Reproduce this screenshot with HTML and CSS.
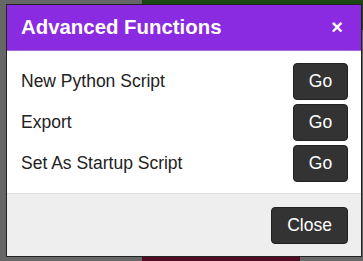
FILE: index.html
```html
<!DOCTYPE html>
<html lang="en">
<head>
  <meta charset="UTF-8">
  <title>Advanced Functions</title>
  <link rel="stylesheet" href="styles.css">
</head>
<body>

  <!-- page behind the dialog -->
  <div class="app">
    <div class="app-bar"></div>
    <div class="app-tile"></div>
  </div>

  <div class="backdrop"></div>

  <div class="modal" id="advancedModal">
    <div class="modal-header">
      <h2>Advanced Functions</h2>
      <span class="modal-close">&times;</span>
    </div>

    <div class="modal-body">
      <div class="action-row">
        <span>New Python Script</span>
        <button class="btn">Go</button>
      </div>
      <div class="action-row">
        <span>Export</span>
        <button class="btn">Go</button>
      </div>
      <div class="action-row">
        <span>Set As Startup Script</span>
        <button class="btn">Go</button>
      </div>
    </div>

    <div class="modal-footer">
      <button class="btn btn-close">Close</button>
    </div>
  </div>

</body>
</html>
```

FILE: styles.css
```css
body {
  font-family: 'Liberation Sans', Arial, sans-serif;
  background-color: #fff;
  margin: 0;
  width: 363px;
  height: 261px;
  overflow: hidden;
  position: relative;
}

.app {
  height: 100%;
  background: #ccc;
}

.app-bar {
  margin-left: 142px;
  height: 30px;
  background: #3a8c2a;
}

.app-tile {
  position: absolute;
  left: 142px;
  bottom: 0;
  width: 158px;
  height: 40px;
  background: #a8184a;
}

.backdrop {
  position: absolute;
  inset: 0;
  background: rgba(0, 0, 0, 0.5);
}

.modal {
  position: absolute;
  left: 6px;
  top: 4px;
  width: 354px;
  border: 1px solid #222;
  background: white;
}

.modal-header {
  background: #8a2be2;
  color: white;
  height: 45px;
  padding: 0 18px 0 14px;
  display: flex;
  justify-content: space-between;
  align-items: center;
  border-bottom: 1px solid #a070d8;
}

.modal-header h2 {
  margin: 0;
  font-size: 20.4px;
  font-weight: bold;
}

.modal-close {
  font-size: 20px;
  font-weight: bold;
  cursor: pointer;
}

.modal-body {
  padding: 12px 13px 11px 14px;
  display: flex;
  flex-direction: column;
  gap: 4px;
  color: #222;
  font-size: 17.5px;
}

.action-row {
  display: flex;
  justify-content: space-between;
  align-items: center;
}

.btn {
  font-family: inherit;
  font-size: 17.5px;
  background: #333;
  color: white;
  border: 1px solid #222;
  border-radius: 4px;
  height: 37px;
  width: 55px;
  padding: 0;
  cursor: pointer;
}

.modal-footer {
  background: #eee;
  border-top: 1px solid #ddd;
  height: 62px;
  padding: 0 13px;
  display: flex;
  justify-content: flex-end;
  align-items: center;
}

.btn-close {
  width: 77px;
}
```
